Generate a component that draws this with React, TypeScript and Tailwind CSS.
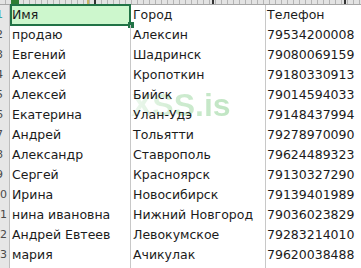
import React from "react";

const rows: [string, string, string][] = [
  ["Имя", "Город", "Телефон"],
  ["продаю", "Алексин", "79534200008"],
  ["Евгений", "Шадринск", "79080069159"],
  ["Алексей", "Кропоткин", "79180330913"],
  ["Алексей", "Бийск", "79014594033"],
  ["Екатерина", "Улан-Удэ", "79148437994"],
  ["Андрей", "Тольятти", "79278970090"],
  ["Александр", "Ставрополь", "79624489323"],
  ["Сергей", "Красноярск", "79130327290"],
  ["Ирина", "Новосибирск", "79139401989"],
  ["нина ивановна", "Нижний Новгород", "79036023829"],
  ["Андрей Евтеев", "Левокумское", "79283214010"],
  ["мария", "Ачикулак", "79620038488"],
  ["", "", ""],
];

export default function App() {
  return (
    <div
      className="relative w-[361px] h-[268px] overflow-hidden bg-white text-[#1b1b1b]"
      style={{ fontFamily: '"DejaVu Sans", Verdana, sans-serif' }}
    >
      {/* watermark (behind the cells) */}
      <div
        className="pointer-events-none absolute left-[131px] top-[89px] text-[32px] font-bold leading-none bg-gradient-to-r from-[#eef8ef] via-[#cdebcf] to-[#c0e5c3] bg-clip-text text-transparent"
        style={{ fontFamily: '"Liberation Sans", Arial, sans-serif' }}
      >
        XSS.is
      </div>

      <div className="relative flex flex-col">
        {/* column header strip */}
        <div className="flex h-[5px] border-b border-[#a6a6a6] bg-[#e3e3e3] bg-[repeating-linear-gradient(90deg,#e3e3e3_0px,#e3e3e3_5px,#b4b4b4_5px,#b4b4b4_6px)]">
          <div className="ml-[11px] w-[8px] h-[4px] bg-[#2e7d32]" />
          <div className="ml-[68px] w-[2px] h-[4px] bg-[#c9b560]" />
          <div className="ml-[5px] w-[2px] h-[4px] bg-[#333]" />
          <div className="ml-[116px] w-[2px] h-[4px] bg-[#333]" />
          <div className="ml-[130px] w-[2px] h-[4px] bg-[#333]" />
        </div>

        {rows.map((r, i) => (
          <div key={i} className="flex h-[20px] text-[12.5px] leading-[20px]">
            <div className="w-[10px] shrink-0 overflow-hidden border-r border-[#bdbdbd] bg-[#e6e6e6]">
              <div
                className={
                  "w-[10px] -ml-[7px] text-right text-[11px] " +
                  (i === 0 ? "text-[#3aa6a6]" : "text-[#4a4a4a]")
                }
              >
                {i + 1}
              </div>
            </div>
            <div
              className={
                "relative w-[121px] shrink-0 border-r border-[#c8c8c8] pl-[2px] whitespace-pre " +
                (i === 0 ? "bg-[#cdf7cd]" : "")
              }
            >
              {r[0]}
              {i === 0 && (
                <>
                  <div className="absolute -top-px left-0 -right-px -bottom-px border-2 border-[#217346]" />
                  <div className="absolute -right-[4px] -bottom-[3px] w-[6px] h-[6px] bg-[#217346]" />
                </>
              )}
            </div>
            <div className="w-[135px] shrink-0 border-r border-[#c8c8c8] pl-[2px] whitespace-pre">
              {r[1]}
            </div>
            <div className="flex-1 pl-[1px] whitespace-pre">{r[2]}</div>
          </div>
        ))}
      </div>
    </div>
  );
}
